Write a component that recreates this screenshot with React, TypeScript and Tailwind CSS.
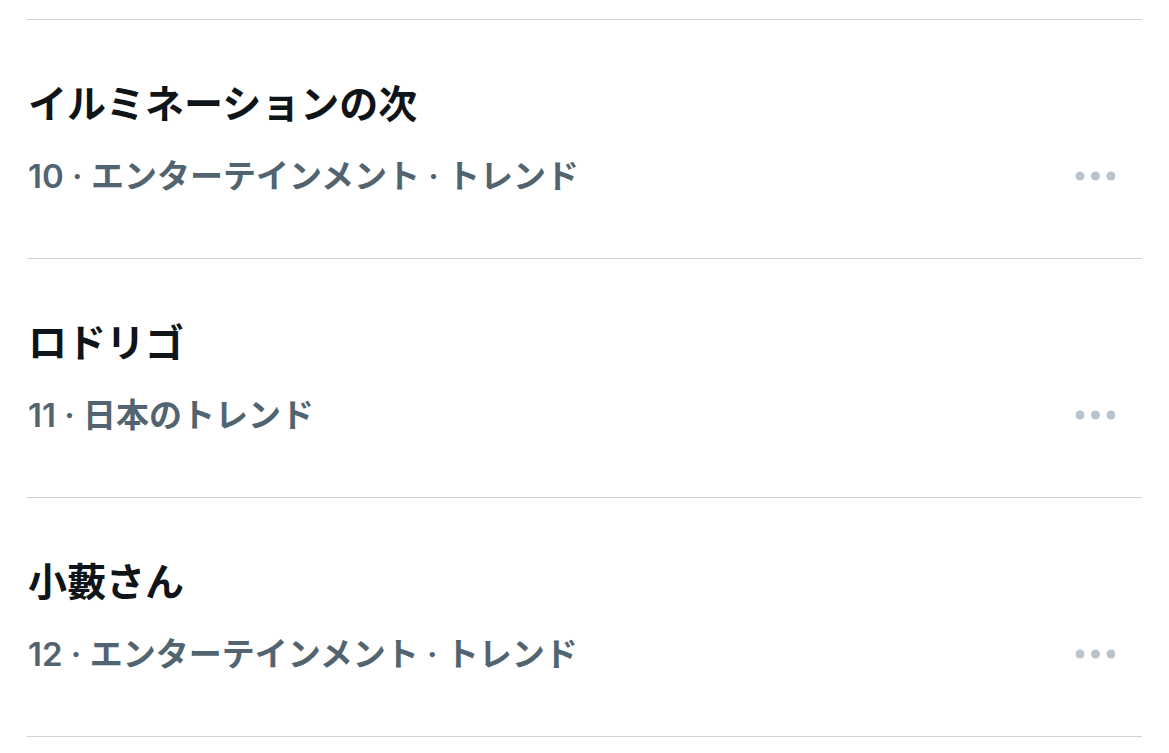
import React from 'react';

interface Trend {
  rank: number;
  title: string;
  category: string;
}

const TRENDS: Trend[] = [
  { rank: 10, title: 'イルミネーションの次', category: 'エンターテインメント · トレンド' },
  { rank: 11, title: 'ロドリゴ', category: '日本のトレンド' },
  { rank: 12, title: '小藪さん', category: 'エンターテインメント · トレンド' },
];

const MoreIcon = () => (
  <svg width="40" height="10" viewBox="0 0 40 10" className="shrink-0">
    <circle cx="5" cy="5" r="4.5" fill="#b8c3cc" />
    <circle cx="20.5" cy="5" r="4.5" fill="#b8c3cc" />
    <circle cx="36" cy="5" r="4.5" fill="#b8c3cc" />
  </svg>
);

export default function App() {
  return (
    <div
      className="w-[1169px] h-[753px] bg-white overflow-hidden pt-[19px]"
      style={{ fontFamily: 'Inter, "Noto Sans CJK JP", sans-serif' }}
    >
      <div className="mx-[27px] border-b border-[#d2d2d2]">
        {TRENDS.map(t => (
          <div key={t.rank} className="border-t border-[#d2d2d2] pt-[60px] pb-[60px] pr-[27px] flex items-end justify-between">
            <div className="flex flex-col gap-[26px] pl-px">
              <p className="text-[39px] leading-[48px] font-bold text-[#0f1419]">{t.title}</p>
              <p className="text-[33px] leading-[44px] font-semibold text-[#536471]">
                {t.rank} · {t.category}
              </p>
            </div>
            <div className="h-[44px] flex items-center pb-[1px]">
              <MoreIcon />
            </div>
          </div>
        ))}
      </div>
    </div>
  );
}
